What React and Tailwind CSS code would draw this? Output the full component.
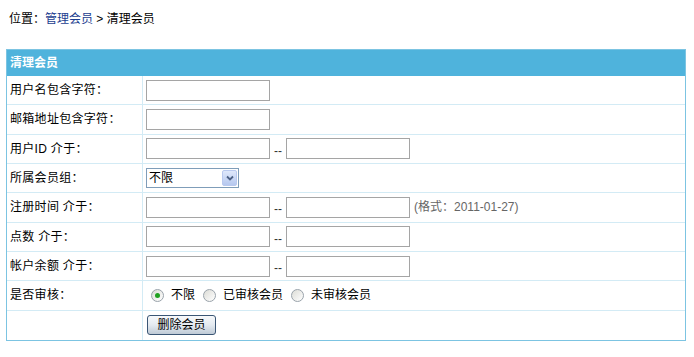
import React, { useState } from "react";

const font = { fontFamily: '"Liberation Sans", "Noto Sans CJK SC", sans-serif' };

const TextBox = () => (
  <input
    type="text"
    className="w-[124px] h-[21px] border border-[#a5a5a5] bg-white px-1 text-[12px] outline-none"
  />
);

const Range = ({ note }) => (
  <div className="flex items-center">
    <TextBox />
    <span className="w-[16px] text-center text-[12px] text-[#333] mt-[4px]">--</span>
    <TextBox />
    {note && <span className="ml-[4px] text-[12px] text-[#666]">{note}</span>}
  </div>
);

const Select = () => (
  <div className="flex h-[20px] w-[93px] items-stretch border border-[#7f9db9] bg-white">
    <div className="flex-1 pl-[2px] text-[12px] leading-[18px] text-black">不限</div>
    <div className="m-[1px] flex w-[15px] items-center justify-center rounded-[2px] border border-[#b9c9ef] bg-gradient-to-b from-[#dfe8fb] to-[#b6c8ef]">
      <svg width="8" height="6" viewBox="0 0 8 6">
        <path d="M1 1.5 L4 4.5 L7 1.5" fill="none" stroke="#4d6185" strokeWidth="1.8" />
      </svg>
    </div>
  </div>
);

const Radio = ({ checked, onClick, label }) => (
  <label className="flex cursor-pointer items-center" onClick={onClick}>
    <span className="flex h-[13px] w-[13px] items-center justify-center rounded-full border border-[#9aa3ab] bg-gradient-to-br from-[#dcdcd6] to-[#ffffff]">
      {checked && <span className="h-[5px] w-[5px] rounded-full bg-[#21a121]" />}
    </span>
    <span className="ml-[7px] mr-[8px] text-[12px]">{label}</span>
  </label>
);

const Row = ({ label, children, last }) => (
  <div
    className={`grid h-[29.33px] grid-cols-[136px_1fr] ${
      last ? "" : "border-b border-[#d3ebf5]"
    }`}
  >
    <div className="flex items-center border-r border-[#d3ebf5] pl-[3px] text-[12px] tracking-[0.3px] text-black">
      {label}
    </div>
    <div className="flex items-center pl-[3px]">{children}</div>
  </div>
);

export default function App() {
  const [audit, setAudit] = useState("all");

  return (
    <div className="min-h-[357px] bg-white px-[6px] pt-[11px] text-black" style={font}>
      <div className="pl-[3px] text-[12px] leading-[16px]">
        位置：<a href="#" className="text-[#1b3d8f]">管理会员</a> &gt; 清理会员
      </div>

      <div className="mt-[22px] w-[680px] border border-[#7cc4e2]">
        <div className="flex h-[26px] items-center bg-[#4fb3dc] pl-[3px] text-[12px] font-bold text-white">
          清理会员
        </div>

        <Row label="用户名包含字符：">
          <TextBox />
        </Row>
        <Row label="邮箱地址包含字符：">
          <TextBox />
        </Row>
        <Row label="用户ID 介于：">
          <Range />
        </Row>
        <Row label="所属会员组：">
          <Select />
        </Row>
        <Row label="注册时间 介于：">
          <Range note="(格式：2011-01-27)" />
        </Row>
        <Row label="点数 介于：">
          <Range />
        </Row>
        <Row label="帐户余额 介于：">
          <Range />
        </Row>
        <Row label="是否审核：">
          <div className="flex items-center pl-[5px]">
            <Radio checked={audit === "all"} onClick={() => setAudit("all")} label="不限" />
            <Radio checked={audit === "yes"} onClick={() => setAudit("yes")} label="已审核会员" />
            <Radio checked={audit === "no"} onClick={() => setAudit("no")} label="未审核会员" />
          </div>
        </Row>
        <Row label="" last>
          <button
            type="button"
            className="ml-[1px] h-[20px] w-[69px] rounded-[3px] border border-[#3b5675] bg-gradient-to-b from-[#f7f9fb] via-[#e4eaf0] to-[#bfcad6] text-[12px] leading-[18px] text-black"
          >
            删除会员
          </button>
        </Row>
      </div>
    </div>
  );
}
